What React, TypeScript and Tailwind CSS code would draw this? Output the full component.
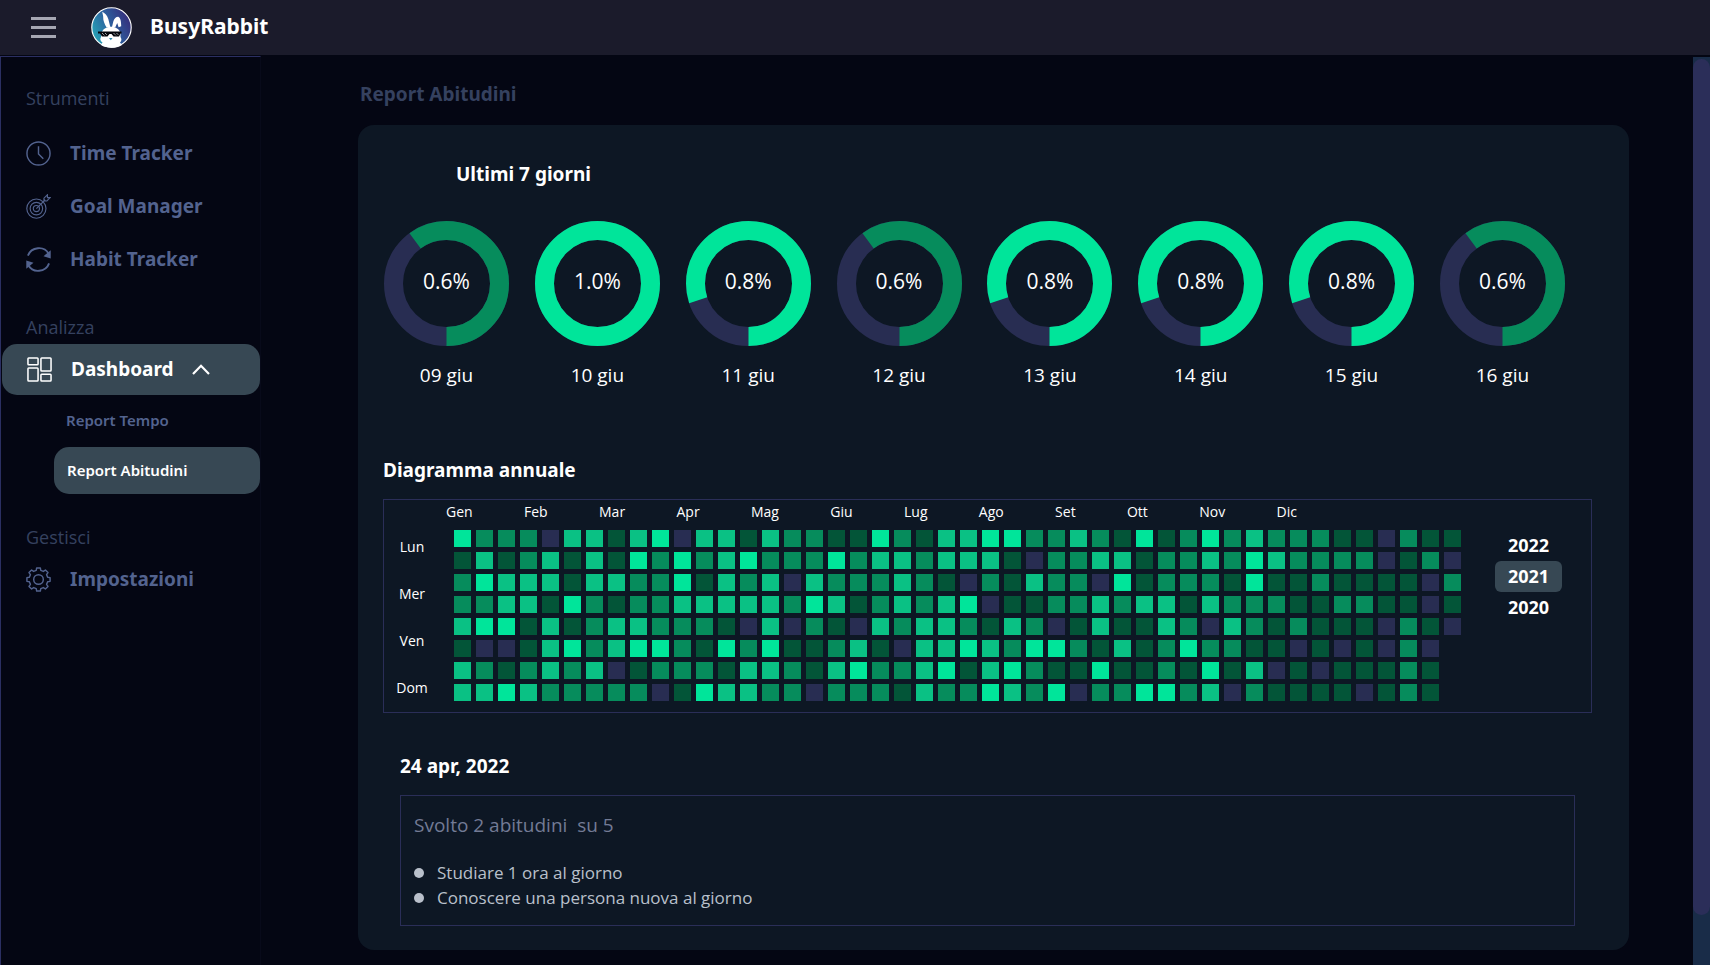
import type { ReactNode } from "react";

const LEVELS = ["bg-[#282d52]", "bg-[#035538]", "bg-[#068c5c]", "bg-[#0ac184]", "bg-[#00e59a]"];

const YEAR_ROWS = [
  "4222033134033132" + "2114213344223214" + "12423222110211",
  "1312313142423422" + "2423323331022331" + "22324322220120",
  "2433313322413230" + "3222321021322041" + "22214112111102",
  "2233142122333332" + "4312323401122323" + "31322211221101",
  "3441312332221030" + "2103233213201311" + "32032121110210",
  "1001342344214241" + "1231033432442131" + "2422110101020",
  "3212323012221332" + "1342234134211411" + "2141301011121",
  "3343222220143322" + "0222132243240224" + "4230211110121",
];

const MONTHS = ["Gen", "Feb", "Mar", "Apr", "Mag", "Giu", "Lug", "Ago", "Set", "Ott", "Nov", "Dic"];
const DAYS = ["Lun", "Mer", "Ven", "Dom"];
const YEARS = ["2022", "2021", "2020"];

const WEEK = [
  { day: "09 giu", value: 0.6 },
  { day: "10 giu", value: 1.0 },
  { day: "11 giu", value: 0.8 },
  { day: "12 giu", value: 0.6 },
  { day: "13 giu", value: 0.8 },
  { day: "14 giu", value: 0.8 },
  { day: "15 giu", value: 0.8 },
  { day: "16 giu", value: 0.6 },
];

function Logo() {
  return (
    <svg viewBox="0 0 41 41" className="size-[41px]" aria-hidden="true">
      <defs>
        <linearGradient id="logo-bg" x1="0" y1="0.75" x2="1" y2="0.25">
          <stop offset="0" stopColor="#27a9b8" />
          <stop offset="0.5" stopColor="#2c5f9e" />
          <stop offset="1" stopColor="#372a78" />
        </linearGradient>
      </defs>
      <circle cx="20.500" cy="20.500" r="19.700" fill="url(#logo-bg)" stroke="#fff" strokeWidth="1.100" />
      <path
        fill="#fff"
        d="M11.200 4.800C14 6 16.200 8.500 17.300 12L19.300 20L15.600 20.500C13.600 17 12 13.500 12.200 10.500C12.300 8.500 11.500 7 11.200 4.800ZM21 20L22.300 14.500C23.200 11.500 25 9.800 27.200 9.800C29.300 10.500 30.200 14 30.200 19.300L27.600 20.200L26.200 16L24.200 20.500Z"
      />
      <path
        fill="#fff"
        d="M10.500 26C11.500 22 15.500 19.700 20 19.700C24.500 19.700 28.500 22 29.500 26L29.500 30C30.800 31.800 30.800 34 29 35.500L31 38C28 40 24 40.800 20.500 40.800C17 40.800 12.500 39.800 10 38L11.500 35.500C9 34 8.800 31.800 10 30Z"
      />
      <path fill="#05060c" d="M7 24.500H30.500V26.500H29.500L28 29.500H22.500L20.500 27H18.500L16.500 29.500H11L9 26.500H7Z" />
      <path stroke="#fff" strokeWidth="0.900" strokeDasharray="1 1" d="M11 26L14 29M14 26L16 28M22.500 26L25.500 29M25.500 26L27.500 28" />
      <path fill="#2a86a8" d="M18 31H21.500L19.800 33.200Z" />
    </svg>
  );
}

const ICON = "size-[25px] shrink-0";

function ClockIcon() {
  return (
    <svg viewBox="0 0 26 26" className={ICON} fill="none" stroke="currentColor" strokeWidth="1.500" aria-hidden="true">
      <circle cx="13" cy="13" r="12" />
      <path d="M13 5.500V13.500L18 18.500" />
    </svg>
  );
}

function TargetIcon() {
  return (
    <svg viewBox="0 0 26 26" className={ICON} fill="none" stroke="currentColor" strokeWidth="1.200" aria-hidden="true">
      <circle cx="10.800" cy="15.200" r="10" />
      <circle cx="10.800" cy="15.200" r="6.500" />
      <circle cx="10.800" cy="15.200" r="3.200" />
      <path d="M10.800 15.200L20 6M18.700 7.300V4.300L22.300 0.800V3.700H25.200L21.700 7.300Z" />
    </svg>
  );
}

function CycleIcon() {
  return (
    <svg viewBox="0 0 26 26" className={ICON} fill="none" stroke="currentColor" strokeWidth="2" aria-hidden="true">
      <path d="M2 9C5.500 -0.500 19 -1.500 23.500 7M24 17C20.500 26.500 7 27.500 2.500 19" />
      <path fill="currentColor" stroke="none" d="M25.700 3.500V12L18.200 9.500ZM0.300 22.500V14L7.800 16.500Z" />
    </svg>
  );
}

function DashboardIcon() {
  return (
    <svg viewBox="0 0 26 26" className={ICON} fill="none" stroke="currentColor" strokeWidth="1.600" aria-hidden="true">
      <rect x="1" y="1" width="10.500" height="7" rx="0.800" />
      <rect x="1" y="11.500" width="10.500" height="13.500" rx="0.800" />
      <rect x="14.500" y="1" width="10.500" height="13.500" rx="0.800" />
      <rect x="14.500" y="18" width="10.500" height="7" rx="0.800" />
    </svg>
  );
}

function gearOutline() {
  const point = (radius: number, degrees: number) => {
    const a = (degrees * Math.PI) / 180;
    return `${(13 + radius * Math.sin(a)).toFixed(2)} ${(13 - radius * Math.cos(a)).toFixed(2)}`;
  };
  const parts: string[] = [];
  for (let i = 0; i < 8; i++) {
    const c = i * 45;
    parts.push(point(9.8, c - 14), point(12.2, c - 9), point(12.2, c + 9), point(9.8, c + 14));
  }
  return `M${parts.join("L")}Z`;
}

function GearIcon() {
  return (
    <svg viewBox="0 0 26 26" className={ICON} fill="none" stroke="currentColor" strokeWidth="1.500" strokeLinejoin="round" aria-hidden="true">
      <path d={gearOutline()} />
      <circle cx="13" cy="13" r="5" />
    </svg>
  );
}

function SectionLabel({ children, className }: { children: ReactNode; className: string }) {
  return <h2 className={`pl-[25px] text-[18px] leading-7 text-[#35415f] ${className}`}>{children}</h2>;
}

function NavItem({ icon, children }: { icon: ReactNode; children: ReactNode }) {
  return (
    <a
      href="#"
      className="flex h-[53px] items-center gap-[19px] pl-[25px] font-['Noto_Sans',sans-serif] text-[19px] font-bold text-[#53638f]"
    >
      {icon}
      {children}
    </a>
  );
}

function Sidebar() {
  return (
    <nav className="mt-px w-[261px] shrink-0 border-t border-r border-l border-[#2b2f62] border-r-[#080a1a]">
      <SectionLabel className="mt-[27px] mb-[15px]">Strumenti</SectionLabel>
      <NavItem icon={<ClockIcon />}>Time Tracker</NavItem>
      <NavItem icon={<TargetIcon />}>Goal Manager</NavItem>
      <NavItem icon={<CycleIcon />}>Habit Tracker</NavItem>

      <SectionLabel className="mt-[27px] mb-[3px]">Analizza</SectionLabel>
      <button
        type="button"
        aria-expanded="true"
        className="ml-px flex h-[51px] w-[258px] items-center rounded-[15px] bg-[#374854] pl-[25px] font-['Noto_Sans',sans-serif] text-[19px] font-bold text-white"
      >
        <DashboardIcon />
        <span className="ml-[19px]">Dashboard</span>
        <svg viewBox="0 0 18 11" className="ml-[18px] h-[11px] w-[18px]" fill="none" stroke="currentColor" strokeWidth="2.200" aria-hidden="true">
          <path d="M1 10L9 1.800L17 10" />
        </svg>
      </button>
      <a
        href="#"
        className="mb-0.5 flex h-[50px] items-center pl-[65px] font-['Noto_Sans',sans-serif] text-[15px] font-semibold text-[#53638f]"
      >
        Report Tempo
      </a>
      <a
        href="#"
        aria-current="page"
        className="ml-[53px] flex h-[47px] items-center rounded-[15px] bg-[#374854] pl-[13px] font-['Noto_Sans',sans-serif] text-[15px] font-semibold text-white"
      >
        Report Abitudini
      </a>

      <SectionLabel className="mt-[29px] mb-0.5">Gestisci</SectionLabel>
      <NavItem icon={<GearIcon />}>Impostazioni</NavItem>
    </nav>
  );
}

function Ring({ day, value }: { day: string; value: number }) {
  const length = 2 * Math.PI * 53;
  return (
    <li className="flex flex-col items-center">
      <div className="grid size-[125px] place-items-center">
        <svg viewBox="0 0 125 125" className="col-start-1 row-start-1 size-[125px]" fill="none" strokeWidth="19" aria-hidden="true">
          <circle cx="62.500" cy="62.500" r="53" stroke="#282d52" />
          <path
            d="M62.500 115.500A53 53 0 0 0 62.500 9.500A53 53 0 0 0 62.500 115.500"
            stroke={value > 0.6 ? "#00e59a" : "#068c5c"}
            strokeDasharray={value < 1 ? `${length * value} ${length}` : undefined}
          />
        </svg>
        <span className="col-start-1 row-start-1 pb-1.5 text-[21px] leading-7">{value.toFixed(1)}%</span>
      </div>
      <span className="mt-[15px] text-[19px] leading-7">{day}</span>
    </li>
  );
}

function YearChart() {
  return (
    <div className="mt-[15px] mr-[37px] flex justify-between border border-[#2a2e58] text-[14px]">
      <div className="flex">
        <div className="w-14 pt-[23px] text-center">
          {DAYS.map((day) => (
            <div key={day} className="flex h-[47px] items-center justify-center">
              {day}
            </div>
          ))}
        </div>
        <div className="pb-[11px] pl-1.5">
          <div className="mb-2 flex h-[22px] w-[851px] items-center justify-between">
            {MONTHS.map((month) => (
              <span key={month}>{month}</span>
            ))}
          </div>
          <div className="ml-2 grid gap-[5px]">
            {YEAR_ROWS.map((row, r) => (
              <div key={r} className="flex gap-[5px]">
                {row.split("").map((level, c) => (
                  <div key={c} className={`size-[17px] ${LEVELS[Number(level)]}`} />
                ))}
              </div>
            ))}
          </div>
        </div>
      </div>
      <div className="mt-[30px] mr-[29px] flex flex-col">
        {YEARS.map((year) => (
          <button
            key={year}
            type="button"
            className={`h-[31px] w-[67px] rounded-md font-['Noto_Sans',sans-serif] text-[18px] font-bold ${
              year === "2021" ? "bg-[#374854]" : ""
            }`}
          >
            {year}
          </button>
        ))}
      </div>
    </div>
  );
}

const HEADING = "font-['Noto_Sans',sans-serif] text-[19px] leading-7 font-bold";

export default function App() {
  return (
    <div className="flex min-h-screen flex-col bg-[#040613] font-['Open_Sans',sans-serif] text-white">
      <header className="flex h-[55px] shrink-0 items-center bg-[#1b1b2b] pl-[31px]">
        <button type="button" aria-label="Menu" className="flex w-[25px] flex-col gap-1.5">
          <span className="h-[3px] bg-[#a6a7b3]" />
          <span className="h-[3px] bg-[#a6a7b3]" />
          <span className="h-[3px] bg-[#a6a7b3]" />
        </button>
        <a href="#" className="ml-[35px] flex items-center gap-[18px]">
          <Logo />
          <span className="pb-[3px] font-['Noto_Sans',sans-serif] text-[21px] leading-7 font-bold">BusyRabbit</span>
        </a>
      </header>

      <div className="flex grow">
        <Sidebar />

        <main className="min-w-0 grow pt-[25px] pr-16 pb-[15px] pl-[97px]">
          <h1 className={`${HEADING} pl-0.5 text-[#35415f]`}>Report Abitudini</h1>

          <div className="mt-[17px] rounded-[16px] bg-[#0d1724] pt-[35px] pb-6 pl-[25px]">
            <h2 className={`${HEADING} pl-[73px]`}>Ultimi 7 giorni</h2>
            <ul className="mt-[33px] mr-16 ml-px flex justify-between">
              {WEEK.map((entry) => (
                <Ring key={entry.day} day={entry.day} value={entry.value} />
              ))}
            </ul>

            <h2 className={`${HEADING} mt-[67px]`}>Diagramma annuale</h2>
            <YearChart />

            <section className="mt-[39px] mr-[54px] ml-[17px]">
              <h2 className={HEADING}>24 apr, 2022</h2>
              <div className="mt-[15px] border border-[#2a2e58] pt-[15px] pb-[15px] pl-[13px]">
                <p className="text-[19px] leading-7 whitespace-pre text-[#737b95]">{"Svolto 2 abitudini  su 5"}</p>
                <ul className="mt-[21px] text-[17px] leading-[25px] text-[#b9c0cb]">
                  {["Studiare 1 ora al giorno", "Conoscere una persona nuova al giorno"].map((habit) => (
                    <li key={habit} className="flex items-center gap-[13px]">
                      <span className="size-2.5 rounded-full bg-[#b9c0cb]" />
                      {habit}
                    </li>
                  ))}
                </ul>
              </div>
            </section>
          </div>
        </main>

        <div className="mt-0.5 flex w-[17px] shrink-0 flex-col bg-[#192c48] pt-0.5 pb-[50px]" aria-hidden="true">
          <div className="grow rounded-full bg-[#2b2e59]" />
        </div>
      </div>
    </div>
  );
}
